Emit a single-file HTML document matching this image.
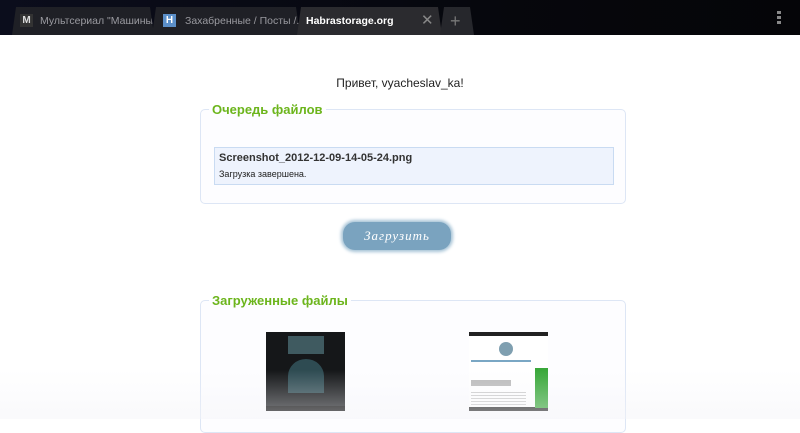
<!DOCTYPE html>
<html><head><meta charset="utf-8"><style>
*{margin:0;padding:0;box-sizing:border-box}
body{width:800px;height:419px;overflow:hidden;background:#fff;font-family:"Liberation Sans",sans-serif;position:relative}
.bar{position:absolute;left:0;top:0;width:800px;height:35px;background:linear-gradient(90deg,#0b0d1c,#06070d 60%,#050508)}
.tab{position:absolute;top:7px;height:28px;background:#1f2026;color:#9a9aa0;font-size:10.5px;line-height:28px;white-space:nowrap;overflow:hidden;clip-path:polygon(4px 0,calc(100% - 4px) 0,100% 100%,0 100%)}
.tab.act{background:#2b2b2f;color:#fff;font-weight:bold}
.ic{position:absolute;top:7px;width:13px;height:13px;font-size:10px;line-height:13px;text-align:center;font-weight:bold}
.menu{position:absolute;left:777px;top:11px;width:4px;height:14px;background:repeating-linear-gradient(#888 0 3px,transparent 3px 5px)}
.hello{position:absolute;top:76px;left:0;width:800px;text-align:center;font-size:12px;color:#222}
fieldset{position:absolute;left:200px;width:426px;border:1.5px solid #dde6f5;border-radius:5px;background:#fdfdff}
legend{margin-left:8px;padding:0 3px;color:#6cb51c;font-weight:bold;font-size:13px}
.item{position:absolute;left:13px;top:30px;width:400px;height:38px;background:#eef3fd;border:1px solid #c9dbf2;padding:4px 4px}
.btn{position:absolute;left:343px;top:222px;width:108px;height:28px;background:#7aa3bf;border-radius:12px;color:#fff;font-family:"Liberation Serif",serif;font-style:italic;font-size:13px;text-align:center;line-height:28px;letter-spacing:1px;box-shadow:0 0 3px 2px #a6c3d6}
.fade{position:absolute;left:0;top:370px;width:800px;height:49px;background:linear-gradient(rgba(255,255,255,0),rgba(244,244,248,.5))}
</style></head><body>
<div class="bar">
 <div class="tab" style="left:12px;width:142px"><span class="ic" style="left:8px;background:#333;color:#ddd">M</span><span style="position:absolute;left:28px">Мультсериал "Машины...</span></div>
 <div class="tab" style="left:152px;width:148px"><span class="ic" style="left:11px;background:#5b8fc9;color:#fff">H</span><span style="position:absolute;left:33px">Захабренные / Посты /...</span></div>
 <div class="tab act" style="left:297px;width:145px"><span style="position:absolute;left:9px">Habrastorage.org</span><span style="position:absolute;left:124px;font-weight:normal;color:#888;font-size:15px">✕</span></div>
 <div class="tab" style="left:440px;width:34px;background:#26272c"><span style="position:absolute;left:10px;color:#777;font-size:18px;font-weight:normal">+</span></div>
 <div class="menu"></div>
</div>
<div class="hello">Привет, vyacheslav_ka!</div>
<fieldset style="top:102px;height:102px"><legend>Очередь файлов</legend>
 <div class="item"><div style="font-weight:bold;font-size:11px;color:#333">Screenshot_2012-12-09-14-05-24.png</div><div style="font-size:9px;color:#222;margin-top:5px">Загрузка завершена.</div></div>
</fieldset>
<div class="btn">Загрузить</div>
<fieldset style="top:293px;height:140px"><legend>Загруженные файлы</legend>
 <div style="position:absolute;left:65px;top:24px;width:79px;height:79px;background:#151719">
  <div style="position:absolute;left:22px;top:4px;width:36px;height:18px;background:#3f5a60"></div>
  <div style="position:absolute;left:22px;top:27px;width:36px;height:34px;background:#2e4b52;border-radius:50% 50% 0 0"></div>
  <div style="position:absolute;left:0;top:74px;width:79px;height:5px;background:#000"></div>
 </div>
 <div style="position:absolute;left:268px;top:24px;width:79px;height:79px;background:#fff;border-top:4px solid #222;border-bottom:4px solid #222">
  <div style="position:absolute;left:30px;top:6px;width:14px;height:14px;background:#7f9fb0;border-radius:50%"></div>
  <div style="position:absolute;left:2px;top:24px;width:60px;height:2px;background:#7aa7c4"></div>
  <div style="position:absolute;left:66px;top:32px;width:13px;height:40px;background:#3aa83a"></div>
  <div style="position:absolute;left:2px;top:44px;width:40px;height:6px;background:#bbb"></div>
  <div style="position:absolute;left:2px;top:56px;width:55px;height:14px;background:repeating-linear-gradient(#ccc 0 1px,#fff 1px 3px)"></div>
 </div>
</fieldset>
<div class="fade"></div>
</body></html>
